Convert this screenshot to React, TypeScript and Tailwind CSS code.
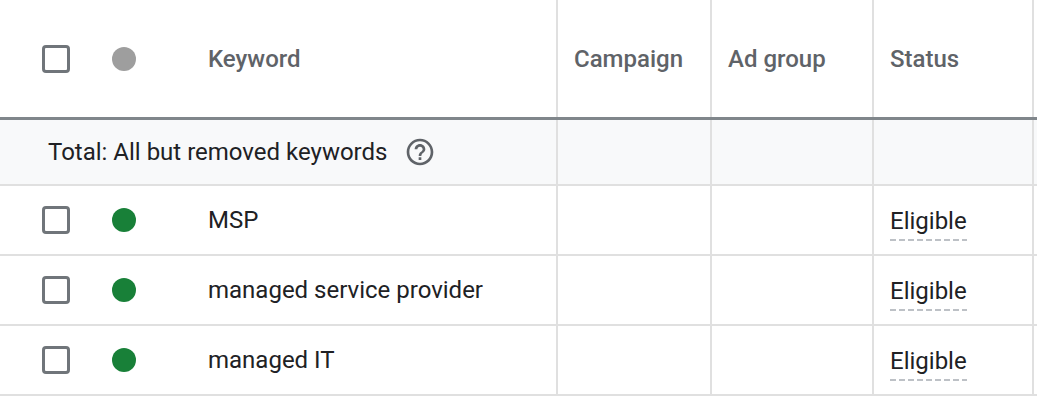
const rows = ["MSP", "managed service provider", "managed IT"];

function Checkbox() {
  return <div className="w-[28px] h-[28px] shrink-0 rounded-[4px] border-[3px] border-[#70757a] bg-white" />;
}

function Dot({ color }: { color: string }) {
  return <div className={`w-6 h-6 shrink-0 rounded-full ${color}`} />;
}

function HelpIcon() {
  return (
    <svg viewBox="0 0 24 24" className="w-[32px] h-[32px] shrink-0" fill="#5f6368">
      <path d="M11 18h2v-2h-2v2zm1-16C6.48 2 2 6.48 2 12s4.48 10 10 10 10-4.48 10-10S17.52 2 12 2zm0 18c-4.41 0-8-3.59-8-8s3.59-8 8-8 8 3.59 8 8-3.59 8-8 8zm0-14c-2.21 0-4 1.790-4 4h2c0-1.1.9-2 2-2s2 .9 2 2c0 2-3 1.75-3 5h2c0-2.25 3-2.5 3-5 0-2.21-1.79-4-4-4z" />
    </svg>
  );
}

export default function App() {
  return (
    <div className="w-[1037px] h-[400px] overflow-hidden bg-white font-['Roboto',sans-serif] text-[24px]">
      {/* header */}
      <div className="flex h-[120px] border-b-[3px] border-[#80868b] text-[#5f6368] font-medium">
        <div className="w-[558px] shrink-0 border-r-2 border-[#e0e0e0] flex items-center pl-[42px]">
          <Checkbox />
          <div className="ml-[42px]"><Dot color="bg-[#9e9e9e]" /></div>
          <span className="ml-[72px]">Keyword</span>
        </div>
        <div className="w-[154px] shrink-0 border-r-2 border-[#e0e0e0] flex items-center pl-[16px]">Campaign</div>
        <div className="w-[162px] shrink-0 border-r-2 border-[#e0e0e0] flex items-center pl-[16px]">Ad group</div>
        <div className="w-[160px] shrink-0 border-r-2 border-[#e0e0e0] flex items-center pl-[16px]">Status</div>
        <div className="flex-1" />
      </div>

      {/* total */}
      <div className="flex h-[66px] bg-[#f8f9fa] border-b-2 border-[#e0e0e0] text-[#202124]">
        <div className="w-[558px] shrink-0 border-r-2 border-[#e0e0e0] flex items-center pl-[48px]">
          <span>Total: All but removed keywords</span>
          <div className="ml-[17px]"><HelpIcon /></div>
        </div>
        <div className="w-[154px] shrink-0 border-r-2 border-[#e0e0e0]" />
        <div className="w-[162px] shrink-0 border-r-2 border-[#e0e0e0]" />
        <div className="w-[160px] shrink-0 border-r-2 border-[#e0e0e0]" />
        <div className="flex-1" />
      </div>

      {rows.map((kw) => (
        <div key={kw} className="flex h-[70px] border-b-2 border-[#e0e0e0] text-[#202124]">
          <div className="w-[558px] shrink-0 border-r-2 border-[#e0e0e0] flex items-center pl-[42px]">
            <Checkbox />
            <div className="ml-[42px]"><Dot color="bg-[#188038]" /></div>
            <span className="ml-[72px]">{kw}</span>
          </div>
          <div className="w-[154px] shrink-0 border-r-2 border-[#e0e0e0]" />
          <div className="w-[162px] shrink-0 border-r-2 border-[#e0e0e0]" />
          <div className="w-[160px] shrink-0 border-r-2 border-[#e0e0e0] flex items-center pl-[16px]">
            <div className="flex flex-col pt-[8px]">
              <span className="leading-[28px]">Eligible</span>
              <div className="mt-[4px] h-[2px] bg-[linear-gradient(to_right,#bdc1c6_6px,transparent_6px)] bg-[length:9px_2px] bg-repeat-x" />
            </div>
          </div>
          <div className="flex-1" />
        </div>
      ))}
    </div>
  );
}
